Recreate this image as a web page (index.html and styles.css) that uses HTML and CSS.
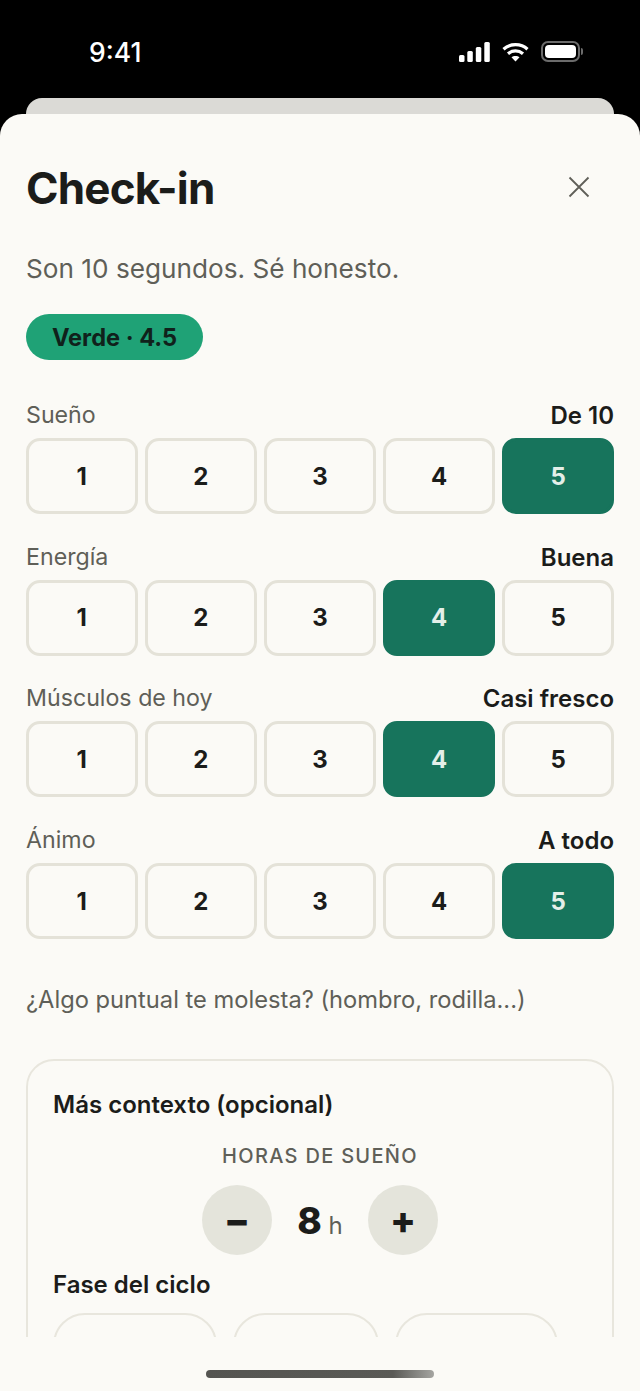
FILE: index.html
```html
<!DOCTYPE html>
<html lang="es">

<head>
    <meta charset="UTF-8">
    <meta name="viewport" content="width=device-width, initial-scale=1.0">
    <title>Check-in</title>
    <link rel="stylesheet" href="styles.css">
</head>

<body>

    <div class="status-bar">
        <span class="status-time">9:41</span>
        <div class="status-icons">
            <svg width="31" height="20" viewBox="0 0 31 20" fill="#fff">
                <rect x="0" y="13" width="5.500" height="7" rx="1.500"></rect>
                <rect x="8.300" y="9" width="5.500" height="11" rx="1.500"></rect>
                <rect x="16.800" y="5" width="5.500" height="15" rx="1.500"></rect>
                <rect x="25.300" y="0" width="5.500" height="20" rx="1.500"></rect>
            </svg>
            <svg width="27" height="20" viewBox="0 0 27 20" fill="none" stroke="#fff" stroke-width="3.200">
                <path d="M1.500 7.200 C8 1.200 19 1.200 25.500 7.200"></path>
                <path d="M6 11.800 C10.500 8 16.500 8 21 11.800"></path>
                <path d="M13.500 19.500 L9.500 15.300 C11.500 13.600 15.500 13.600 17.500 15.300 Z" fill="#fff" stroke="none"></path>
            </svg>
            <div class="battery">
                <div class="battery-fill"></div>
            </div>
            <div class="battery-cap"></div>
        </div>
    </div>

    <div class="back-sheet"></div>

    <div class="sheet">
        <div class="sheet-scroll">
            <div class="sheet-header">
                <h1>Check-in</h1>
                <svg class="close-icon" width="22" height="22" viewBox="0 0 22 22" stroke="#5f5f58" stroke-width="1.800" fill="none">
                    <path d="M1.500 1.500 L20.500 20.500 M20.500 1.500 L1.500 20.500"></path>
                </svg>
            </div>
            <p class="subtitle">Son 10 segundos. Sé honesto.</p>
            <div class="score-pill">Verde · 4.5</div>

            <div class="metric">
                <div class="metric-head"><span>Sueño</span><strong>De 10</strong></div>
                <div class="scale">
                    <div class="scale-btn">1</div>
                    <div class="scale-btn">2</div>
                    <div class="scale-btn">3</div>
                    <div class="scale-btn">4</div>
                    <div class="scale-btn selected">5</div>
                </div>
            </div>

            <div class="metric">
                <div class="metric-head"><span>Energía</span><strong>Buena</strong></div>
                <div class="scale">
                    <div class="scale-btn">1</div>
                    <div class="scale-btn">2</div>
                    <div class="scale-btn">3</div>
                    <div class="scale-btn selected">4</div>
                    <div class="scale-btn">5</div>
                </div>
            </div>

            <div class="metric">
                <div class="metric-head"><span>Músculos de hoy</span><strong>Casi fresco</strong></div>
                <div class="scale">
                    <div class="scale-btn">1</div>
                    <div class="scale-btn">2</div>
                    <div class="scale-btn">3</div>
                    <div class="scale-btn selected">4</div>
                    <div class="scale-btn">5</div>
                </div>
            </div>

            <div class="metric">
                <div class="metric-head"><span>Ánimo</span><strong>A todo</strong></div>
                <div class="scale">
                    <div class="scale-btn">1</div>
                    <div class="scale-btn">2</div>
                    <div class="scale-btn">3</div>
                    <div class="scale-btn">4</div>
                    <div class="scale-btn selected">5</div>
                </div>
            </div>

            <p class="note">¿Algo puntual te molesta? (hombro, rodilla...)</p>

            <div class="context-card">
                <h2>Más contexto (opcional)</h2>
                <div class="hours-label">HORAS DE SUEÑO</div>
                <div class="stepper">
                    <div class="step-btn">−</div>
                    <div class="step-value"><b>8</b> <span>h</span></div>
                    <div class="step-btn">+</div>
                </div>
                <h2 class="phase-title">Fase del ciclo</h2>
                <div class="phase-row">
                    <div class="phase-chip chip-a"></div>
                    <div class="phase-chip chip-b"></div>
                    <div class="phase-chip chip-c"></div>
                </div>
            </div>
        </div>
        <div class="home-indicator"></div>
    </div>

</body>

</html>
```

FILE: styles.css
```css
* {
    box-sizing: border-box;
}

html,
body {
    margin: 0;
    padding: 0;
    height: 1391px;
    overflow: hidden;
    background-color: #000;
}

body {
    font-family: 'Inter', 'Liberation Sans', sans-serif;
    color: #1b1c1a;
    display: flex;
    flex-direction: column;
}

.status-bar {
    height: 98px;
    flex-shrink: 0;
    display: flex;
    justify-content: space-between;
    align-items: flex-start;
    padding: 37px 57px 0 89px;
    color: #fff;
}

.status-time {
    font-size: 26.500px;
    line-height: 30px;
    font-weight: 500;
}

.status-icons {
    display: flex;
    align-items: center;
    gap: 12px;
    padding-top: 4px;
}

.battery {
    width: 39px;
    height: 21px;
    border: 2px solid #6b6b6b;
    border-radius: 7px;
    padding: 2px;
}

.battery-fill {
    height: 100%;
    background-color: #fff;
    border-radius: 4px;
}

.battery-cap {
    width: 2px;
    height: 7px;
    background-color: #6b6b6b;
    border-radius: 0 2px 2px 0;
    margin-left: -11px;
}

.back-sheet {
    height: 16px;
    flex-shrink: 0;
    margin: 0 26px;
    background-color: #dbdad6;
    border-radius: 16px 16px 0 0;
}

.sheet {
    flex: 1;
    background-color: #fbfaf6;
    border-radius: 22px 22px 0 0;
    display: flex;
    flex-direction: column;
    min-height: 0;
}

.sheet-scroll {
    height: 1223px;
    overflow: hidden;
    padding: 0 26px;
}

.sheet-header {
    display: flex;
    justify-content: space-between;
    align-items: center;
    padding: 47px 24px 0 0;
}

.close-icon {
    margin-bottom: 2px;
}

h1 {
    margin: 0;
    font-size: 44px;
    line-height: 54px;
    font-weight: 700;
    letter-spacing: -0.8px;
}

.subtitle {
    margin: 38px 0 0;
    font-size: 26.200px;
    line-height: 32px;
    color: #5f5f58;
}

.score-pill {
    margin-top: 29px;
    width: 177px;
    height: 46px;
    border-radius: 23px;
    background-color: #1fa276;
    display: flex;
    align-items: center;
    justify-content: center;
    font-size: 23.600px;
    font-weight: 700;
    color: #10211b;
}

.metric {
    margin-top: 31.700px;
}

.score-pill + .metric {
    margin-top: 44px;
}

.metric-head {
    display: flex;
    justify-content: space-between;
    align-items: flex-start;
    height: 24px;
    line-height: 23px;
    margin-bottom: 10px;
    font-size: 23.200px;
    color: #5f5f58;
}

.metric-head strong {
    font-size: 24px;
    font-weight: 600;
    color: #1b1c1a;
}

.scale {
    display: flex;
    gap: 7.500px;
}

.scale-btn {
    flex: 1;
    height: 76px;
    border: 3px solid #e4e2d8;
    border-radius: 14px;
    display: flex;
    align-items: center;
    justify-content: center;
    font-size: 24px;
    font-weight: 700;
}

.scale-btn.selected {
    background-color: #17745c;
    border-color: #17745c;
    color: #e4efe9;
}

.note {
    margin: 47px 0 0;
    font-size: 23.700px;
    line-height: 28px;
    color: #5f5f58;
}

.context-card {
    margin-top: 45px;
    border: 2px solid #e8e6dd;
    border-radius: 28px;
    padding: 28px 25px;
    height: 320px;
}

h2 {
    margin: 0;
    font-size: 24px;
    line-height: 32px;
    font-weight: 600;
}

.hours-label {
    margin-top: 22px;
    text-align: center;
    font-size: 20px;
    line-height: 26px;
    font-weight: 500;
    letter-spacing: 1.300px;
    color: #5f5f58;
}

.stepper {
    margin-top: 16px;
    display: flex;
    justify-content: center;
    align-items: center;
    gap: 12px;
}

.step-btn {
    width: 70px;
    height: 70px;
    border-radius: 50%;
    background-color: #e4e4db;
    display: flex;
    align-items: center;
    justify-content: center;
    font-size: 38px;
    font-weight: 800;
}

.step-value {
    width: 72px;
    text-align: center;
    white-space: nowrap;
}

.step-value b {
    font-size: 37px;
    font-weight: 800;
}

.step-value span {
    font-size: 24px;
    margin-left: 2px;
    color: #5f5f58;
}

.phase-title {
    margin-top: 14px;
}

.phase-row {
    margin-top: 12px;
    display: flex;
    gap: 16px;
}

.phase-chip {
    height: 76px;
    border: 2px solid #e8e6dd;
    border-radius: 32px;
}

.chip-a {
    width: 164px;
}

.chip-b {
    width: 146px;
}

.chip-c {
    width: 163px;
}

.home-indicator {
    width: 228px;
    height: 8px;
    margin: 33px auto 0;
    border-radius: 4px;
    background: linear-gradient(90deg, #555551 0%, #5a5a56 82%, #a5a5a1 100%);
}
```
